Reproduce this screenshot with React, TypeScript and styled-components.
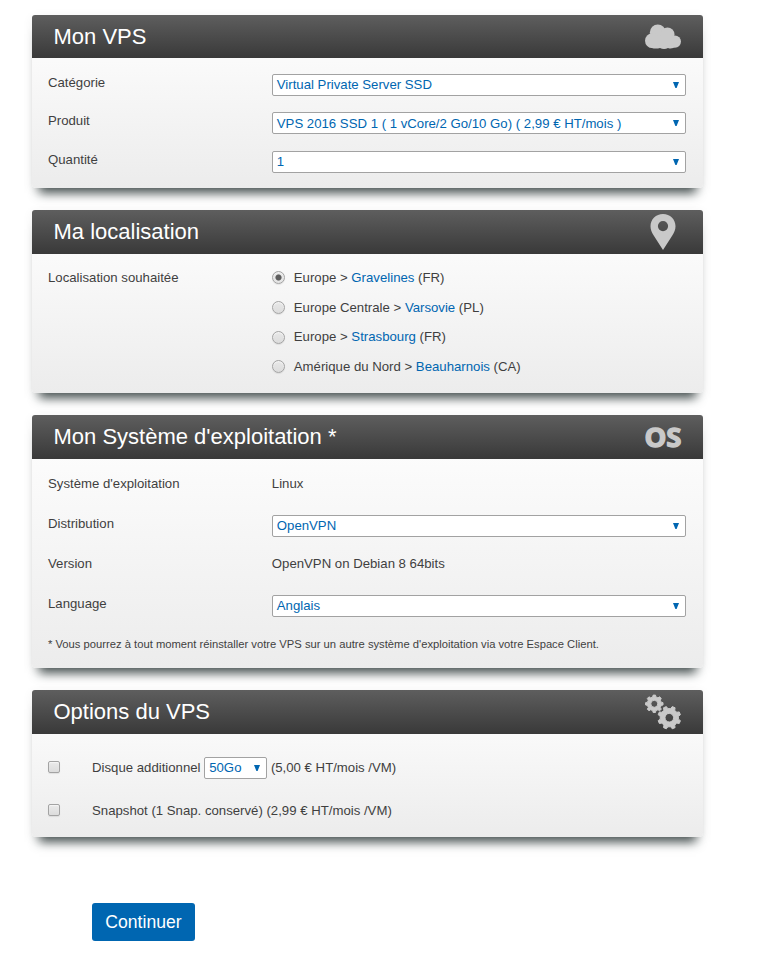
import React, { useState } from "react";
import styled, { createGlobalStyle } from "styled-components";

const GlobalStyle = createGlobalStyle`
  * { box-sizing: border-box; }
  body {
    margin: 0;
    background: #fff;
    color: #3f3f3f;
    font-family: "Liberation Sans", Arial, sans-serif;
    font-size: 13.2px;
  }
`;

const Page = styled.main`
  width: 758px;
  height: 960px;
  padding: 15px 55px 0 32px;
  overflow: hidden;
`;

const Panel = styled.section<{ $height: number }>`
  height: ${(p) => p.$height}px;
  margin-bottom: 22px;
  border-radius: 4px;
  background: linear-gradient(#fff, #ececec);
  box-shadow: 0 12px 10px -7px #465050, 0 2px 12px rgba(0, 0, 0, 0.06);
`;

const Header = styled.header<{ $height?: number }>`
  display: flex;
  justify-content: space-between;
  align-items: center;
  height: ${(p) => p.$height ?? 44}px;
  padding: 0 22px 0 21.5px;
  border-radius: 3px 3px 0 0;
  background: linear-gradient(#5e5e5e, #393939);
`;

const Title = styled.h2`
  margin: 0;
  color: #fff;
  font-size: 22px;
  font-weight: 400;
  line-height: 44px;
`;

const Icon = styled.svg`
  display: block;
  width: 36px;
  height: 36px;
  overflow: visible;
  fill: #c9c9c9;
`;

const Body = styled.div<{ $top?: number }>`
  padding: ${(p) => p.$top ?? 16}px 17px 0 16px;
`;

const Row = styled.div<{ $height: number }>`
  display: grid;
  grid-template-columns: 223.8px 414px;
  align-items: start;
  height: ${(p) => p.$height}px;
`;

const Label = styled.div`
  line-height: 18px;
`;

const SelectBox = styled.button<{ $width?: number }>`
  display: flex;
  justify-content: space-between;
  align-items: center;
  width: ${(p) => (p.$width ? `${p.$width}px` : "100%")};
  height: 22px;
  padding: 0 6px 0 4px;
  border: 1px solid #a2a2a2;
  border-radius: 2px;
  background: #fff;
  color: #0066b1;
  font: inherit;
  line-height: 20px;
  white-space: pre;
`;

const Value = styled.span<{ $drop?: number }>`
  padding-top: ${(p) => (p.$drop ?? 0) * 2}px;
  line-height: 18px;
`;

const Arrow = styled.svg`
  width: 6px;
  height: 6px;
  fill: #0066b1;
`;

const Choices = styled.div`
  display: flex;
  flex-direction: column;
`;

const Radio = styled.input`
  appearance: none;
  width: 13px;
  height: 13px;
  margin: 0;
  border: 1px solid #a3a3a3;
  border-radius: 50%;
  background: linear-gradient(#e8e8e8, #dcdcdc);
  box-shadow: inset 0 1px 1px #f5f5f5, 0 1px 1px rgba(0, 0, 0, 0.08);

  &:checked {
    background: radial-gradient(circle, #5d5d5d 2.6px, #e5e5e5 3.5px);
  }
`;

const Choice = styled.label`
  display: flex;
  align-items: center;
  gap: 9px;
  height: 18px;
  margin-bottom: 11.6px;
  line-height: 18px;

  &:first-child ${Radio} {
    margin-bottom: 1px;
  }
`;

const City = styled.span`
  color: #0066b1;
`;

const Note = styled.p`
  margin: 0;
  font-size: 11.22px;
  line-height: 18px;
`;

const OptionRow = styled.div`
  display: flex;
  align-items: center;
  height: 43px;
`;

const Checkbox = styled.input`
  appearance: none;
  width: 12px;
  height: 12px;
  margin: 0 32px 1px 0;
  border: 1px solid #a3a3a3;
  border-radius: 2px;
  background: linear-gradient(#eaeaea, #dcdcdc);
  box-shadow: inset 0 1px 1px #f5f5f5, 0 1px 1px rgba(0, 0, 0, 0.08);
`;

const OptionText = styled.div`
  display: flex;
  align-items: center;
  gap: 3.7px;
`;

const Continue = styled.button`
  display: block;
  width: 103px;
  height: 38px;
  margin: 66px 0 0 60px;
  padding: 0;
  border: 0;
  border-radius: 3px;
  background: #0066b1;
  color: #fff;
  font: 17.6px "Liberation Sans", Arial, sans-serif;
`;

function Select({ value, width, drop }: { value: string; width?: number; drop?: number }) {
  return (
    <SelectBox type="button" $width={width}>
      <Value $drop={drop}>{value}</Value>
      <Arrow viewBox="0 0 6 6"><path d="M0 0h6L3.6 6H2.4z" /></Arrow>
    </SelectBox>
  );
}

function gearPath(cx: number, cy: number, outer: number, inner: number, hole: number, turn: number) {
  const teeth = 8;
  const step = (Math.PI * 2) / teeth;
  const at = (r: number, a: number) => `${(cx + r * Math.cos(a)).toFixed(2)} ${(cy + r * Math.sin(a)).toFixed(2)}`;
  const points: string[] = [];
  for (let i = 0; i < teeth; i++) {
    const a = i * step + turn;
    points.push(at(inner, a - step * 0.3), at(outer, a - step * 0.17), at(outer, a + step * 0.17), at(inner, a + step * 0.3));
  }
  return `M${points.join("L")}ZM${cx - hole} ${cy}a${hole} ${hole} 0 1 0 ${hole * 2} 0a${hole} ${hole} 0 1 0 ${-hole * 2} 0Z`;
}

const CloudIcon = () => (
  <Icon viewBox="0 0 36 36">
    <circle cx="12.8" cy="13.300" r="7.900" />
    <circle cx="22.500" cy="15.500" r="7" />
    <circle cx="7.400" cy="21.700" r="7.400" />
    <circle cx="29.900" cy="22.600" r="6.100" />
    <path d="M6 18h24v9.500c-1.200 1.700-4.300 2.500-7 1.400-2.500 1.600-5.700 1.400-8 0-3 1-5.500.8-9-.2z" />
  </Icon>
);

const PinIcon = () => (
  <Icon viewBox="0 0 36 36">
    <path fillRule="evenodd" d="M18 0C10.900 0 5.500 5.300 5.500 12.200c0 3.400 1.300 6 3.200 9.400L18 36l9.300-14.400c1.900-3.400 3.200-6 3.200-9.400C30.500 5.300 25.100 0 18 0zm0 7a5.100 5.100 0 1 1 0 10.200A5.100 5.100 0 0 1 18 7z" />
  </Icon>
);

const OsIcon = () => (
  <Icon viewBox="0 0 36 36">
    <text x="-0.600" y="28" fontFamily='"Open Sans", "Noto Sans", sans-serif' fontSize="26" fontWeight="700" textLength="37" lengthAdjust="spacingAndGlyphs" stroke="#c9c9c9" strokeWidth="1.3" strokeLinejoin="round">OS</text>
  </Icon>
);

const GearsIcon = () => (
  <Icon viewBox="0 0 36 36">
    <path fillRule="evenodd" strokeLinejoin="round" stroke="#c9c9c9" strokeWidth="1" d={gearPath(9.3, 9.8, 8.8, 7, 3.5, 0)} />
    <path fillRule="evenodd" strokeLinejoin="round" stroke="#c9c9c9" strokeWidth="1" d={gearPath(24.3, 23.7, 11.5, 9.2, 4.3, Math.PI / 8)} />
  </Icon>
);

const locations = [
  { region: "Europe", city: "Gravelines", country: "FR" },
  { region: "Europe Centrale", city: "Varsovie", country: "PL" },
  { region: "Europe", city: "Strasbourg", country: "FR" },
  { region: "Amérique du Nord", city: "Beauharnois", country: "CA" },
];

export default function App() {
  const [city, setCity] = useState("Gravelines");
  return (
    <Page>
      <GlobalStyle />
      <Panel $height={173}>
        <Header $height={43}><Title>Mon VPS</Title><CloudIcon /></Header>
        <Body>
          <Row $height={38}><Label>Catégorie</Label><Select value="Virtual Private Server SSD" /></Row>
          <Row $height={39}><Label>Produit</Label><Select drop={1} value="VPS 2016 SSD 1 ( 1 vCore/2 Go/10 Go) ( 2,99 € HT/mois )" /></Row>
          <Row $height={22}><Label>Quantité</Label><Select value="1" /></Row>
        </Body>
      </Panel>
      <Panel $height={183}>
        <Header><Title>Ma localisation</Title><PinIcon /></Header>
        <Body $top={15}>
          <Row $height={120}>
            <Label>Localisation souhaitée</Label>
            <Choices>
              {locations.map((l) => (
                <Choice key={l.city}>
                  <Radio type="radio" name="location" checked={city === l.city} onChange={() => setCity(l.city)} />
                  <span>{l.region} &gt; <City>{l.city}</City> ({l.country})</span>
                </Choice>
              ))}
            </Choices>
          </Row>
        </Body>
      </Panel>
      <Panel $height={253}>
        <Header><Title>Mon Système d'exploitation *</Title><OsIcon /></Header>
        <Body>
          <Row $height={40}><Label>Système d'exploitation</Label><Label>Linux</Label></Row>
          <Row $height={40}><Label>Distribution</Label><Select value="OpenVPN" /></Row>
          <Row $height={40}><Label>Version</Label><Label>OpenVPN on Debian 8 64bits</Label></Row>
          <Row $height={40}><Label>Language</Label><Select value="Anglais" /></Row>
          <Note>* Vous pourrez à tout moment réinstaller votre VPS sur un autre système d'exploitation via votre Espace Client.</Note>
        </Body>
      </Panel>
      <Panel $height={147}>
        <Header><Title>Options du VPS</Title><GearsIcon /></Header>
        <Body $top={12}>
          <OptionRow>
            <Checkbox type="checkbox" />
            <OptionText>Disque additionnel <Select value="50Go" width={63} /> (5,00 € HT/mois /VM)</OptionText>
          </OptionRow>
          <OptionRow>
            <Checkbox type="checkbox" />
            <OptionText>Snapshot (1 Snap. conservé) (2,99 € HT/mois /VM)</OptionText>
          </OptionRow>
        </Body>
      </Panel>
      <Continue type="button">Continuer</Continue>
    </Page>
  );
}
